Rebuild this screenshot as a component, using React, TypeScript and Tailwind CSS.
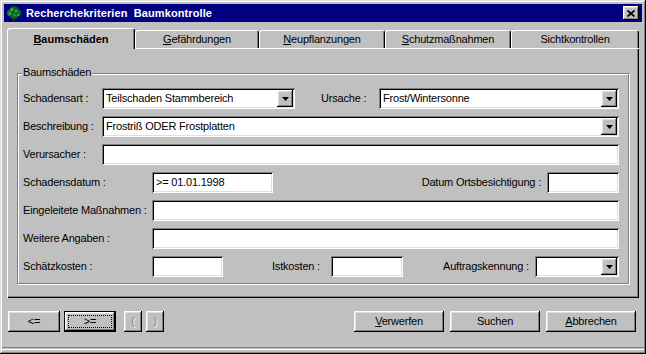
import React from "react"

// Win95-style bevels
const sunken =
  "shadow-[inset_1px_1px_0_#808080,inset_-1px_-1px_0_#fff,inset_2px_2px_0_#000,inset_-2px_-2px_0_#dfdfdf]"
const raised =
  "shadow-[inset_-1px_-1px_0_#000,inset_1px_1px_0_#fff,inset_-2px_-2px_0_#808080,inset_2px_2px_0_#dfdfdf]"

const TreeIcon = () => (
  <svg width="16" height="16" viewBox="0 0 16 16">
    <circle cx="8" cy="6" r="5" fill="#0a5a1a" />
    <circle cx="4.5" cy="8" r="3.5" fill="#137a26" />
    <circle cx="11.5" cy="8" r="3.5" fill="#0f6b20" />
    <circle cx="8" cy="10" r="4" fill="#0c6420" />
    <circle cx="6" cy="4.5" r="1.6" fill="#3fae4a" />
    <circle cx="10" cy="6" r="1.4" fill="#33a040" />
    <circle cx="4" cy="8.5" r="1.2" fill="#47b854" />
    <circle cx="8.5" cy="10" r="1.3" fill="#2d9a3c" />
    <circle cx="12" cy="10" r="1" fill="#47b854" />
    <rect x="7" y="13" width="2" height="3" fill="#3a2a10" />
  </svg>
)

const DropButton = () => (
  <div className={`w-[16px] h-[17px] bg-[#c0c0c0] ${raised} flex items-center justify-center shrink-0`}>
    <svg width="7" height="4" viewBox="0 0 7 4">
      <path d="M0 0H7L3.5 4Z" fill="#000" />
    </svg>
  </div>
)

function Field({ className, value }: { className?: string; value?: string }) {
  return (
    <div
      className={`h-full bg-white ${sunken} ${className ?? "flex-1"} flex items-center px-[4px] whitespace-nowrap overflow-hidden`}
    >
      {value}
    </div>
  )
}

function Combo({ className, value }: { className?: string; value?: string }) {
  return (
    <div className={`h-full bg-white ${sunken} ${className ?? "flex-1"} flex items-center pl-[4px] pr-[2px]`}>
      <span className="flex-1 whitespace-nowrap overflow-hidden">{value}</span>
      <DropButton />
    </div>
  )
}

function Tab({ children, width, active }: { children: React.ReactNode; width: string; active?: boolean }) {
  if (active) {
    return (
      <div
        className={`${width} h-[21px] relative z-10 bg-[#c0c0c0] border-l border-t border-white border-r border-r-black rounded-t-[3px] shadow-[inset_-1px_0_0_#808080] flex items-center justify-center font-bold tracking-normal`}
      >
        {children}
      </div>
    )
  }
  return (
    <div
      className={`${width} h-[18px] mt-[2px] bg-[#c0c0c0] border-l border-t border-white border-r border-r-black rounded-t-[3px] shadow-[inset_-1px_0_0_#808080] flex items-center justify-center`}
    >
      {children}
    </div>
  )
}

function Button({
  children,
  width,
  isDefault,
  disabled,
}: {
  children: React.ReactNode
  width: string
  isDefault?: boolean
  disabled?: boolean
}) {
  const text = disabled ? "text-[#808080] [text-shadow:1px_1px_0_#fff]" : ""
  if (isDefault) {
    return (
      <div className={`${width} h-[21px] border border-black`}>
        <div className={`h-full bg-[#c0c0c0] ${raised} p-[3px]`}>
          <div className="h-full border border-dotted border-black flex items-center justify-center">
            {children}
          </div>
        </div>
      </div>
    )
  }
  return (
    <div className={`${width} h-[21px] bg-[#c0c0c0] ${raised} flex items-center justify-center ${text}`}>
      {children}
    </div>
  )
}

const Label = ({ children, className }: { children: React.ReactNode; className?: string }) => (
  <span className={`whitespace-nowrap shrink-0 ${className ?? ""}`}>{children}</span>
)

export default function App() {
  return (
    <div className="w-[646px] h-[354px] bg-[#c0c0c0] p-[4px] flex flex-col text-[11px] tracking-[-0.2px] text-black font-['Liberation_Sans',Arial,sans-serif] shadow-[inset_-1px_-1px_0_#000,inset_1px_1px_0_#dfdfdf,inset_-2px_-2px_0_#808080,inset_2px_2px_0_#fff]">
      {/* Title bar */}
      <div className="h-[18px] bg-[#000080] flex items-center pl-[2px] pr-[3px] shrink-0">
        <TreeIcon />
        <span className="ml-[4px] text-white font-bold whitespace-nowrap tracking-[0.1px]">
          Recherchekriterien&nbsp; Baumkontrolle
        </span>
        <div className="flex-1" />
        <div className={`w-[16px] h-[14px] bg-[#c0c0c0] ${raised} flex items-center justify-center`}>
          <svg width="8" height="7" viewBox="0 0 8 7">
            <path d="M0.5 0.5L7.5 6.5M7.5 0.5L0.5 6.5" stroke="#000" strokeWidth="1.7" />
          </svg>
        </div>
      </div>

      {/* Tabs */}
      <div className="mt-[6px] ml-[3px] h-[20px] flex items-start shrink-0">
        <Tab width="w-[128px]" active>
          <span className="underline">B</span>aumschäden
        </Tab>
        <Tab width="w-[124px]">
          <span className="underline">G</span>efährdungen
        </Tab>
        <Tab width="w-[126px]">
          <span className="underline">N</span>eupflanzungen
        </Tab>
        <Tab width="w-[126px]">
          <span className="underline">S</span>chutzmaßnahmen
        </Tab>
        <Tab width="w-[128px]">Sichtkontrollen</Tab>
      </div>

      {/* Tab panel */}
      <div className="mx-[3px] h-[250px] shrink-0 pt-[25px] px-[10px] shadow-[inset_1px_1px_0_#fff,inset_-1px_-1px_0_#000,inset_-2px_-2px_0_#808080]">
        <div className="relative h-[211px] border border-[#808080] shadow-[inset_1px_1px_0_#fff,1px_1px_0_#fff] pt-[14px] pl-[5px] pr-[9px]">
          <span className="absolute left-[4px] top-[-8px] bg-[#c0c0c0] px-[1px] leading-[13px]">Baumschäden</span>

          <div className="flex flex-col gap-[7px]">
            <div className="h-[21px] flex items-center">
              <Label className="w-[79px]">Schadensart :</Label>
              <Combo className="w-[193px]" value="Teilschaden Stammbereich" />
              <Label className="ml-[26px] w-[58px]">Ursache :</Label>
              <Combo value="Frost/Wintersonne" />
            </div>

            <div className="h-[21px] flex items-center">
              <Label className="w-[79px]">Beschreibung :</Label>
              <Combo value="Frostriß ODER Frostplatten" />
            </div>

            <div className="h-[21px] flex items-center">
              <Label className="w-[79px]">Verursacher :</Label>
              <Field />
            </div>

            <div className="h-[21px] flex items-center">
              <Label className="w-[129px]">Schadensdatum :</Label>
              <Field className="w-[121px]" value=">= 01.01.1998" />
              <div className="flex-1" />
              <Label className="mr-[6px]">Datum Ortsbesichtigung :</Label>
              <Field className="w-[72px]" />
            </div>

            <div className="h-[21px] flex items-center">
              <Label className="w-[129px]">Eingeleitete Maßnahmen :</Label>
              <Field />
            </div>

            <div className="h-[21px] flex items-center">
              <Label className="w-[129px]">Weitere Angaben :</Label>
              <Field />
            </div>

            <div className="h-[21px] flex items-center">
              <Label className="w-[129px]">Schätzkosten :</Label>
              <Field className="w-[71px]" />
              <Label className="ml-[49px] w-[59px]">Istkosten :</Label>
              <Field className="w-[72px]" />
              <Label className="ml-[40px] w-[92px]">Auftragskennung :</Label>
              <Combo />
            </div>
          </div>
        </div>
      </div>

      {/* Buttons */}
      <div className="mt-[13px] ml-[4px] mr-[6px] flex items-center shrink-0">
        <Button width="w-[52px]">&lt;=</Button>
        <div className="ml-[4px]">
          <Button width="w-[52px]" isDefault>
            &gt;=
          </Button>
        </div>
        <div className="ml-[8px]">
          <Button width="w-[18px]" disabled>
            (
          </Button>
        </div>
        <div className="ml-[4px]">
          <Button width="w-[18px]" disabled>
            )
          </Button>
        </div>
        <div className="flex-1" />
        <Button width="w-[90px]">
          <span>
            <span className="underline">V</span>erwerfen
          </span>
        </Button>
        <div className="ml-[6px]">
          <Button width="w-[90px]">Suchen</Button>
        </div>
        <div className="ml-[6px]">
          <Button width="w-[90px]">
            <span>
              <span className="underline">A</span>bbrechen
            </span>
          </Button>
        </div>
      </div>

      {/* Etched bottom edge */}
      <div className="mt-auto mb-[1px] -mx-[2px] h-[2px] border-t border-[#808080] shadow-[0_1px_0_#fff] shrink-0" />
    </div>
  )
}
